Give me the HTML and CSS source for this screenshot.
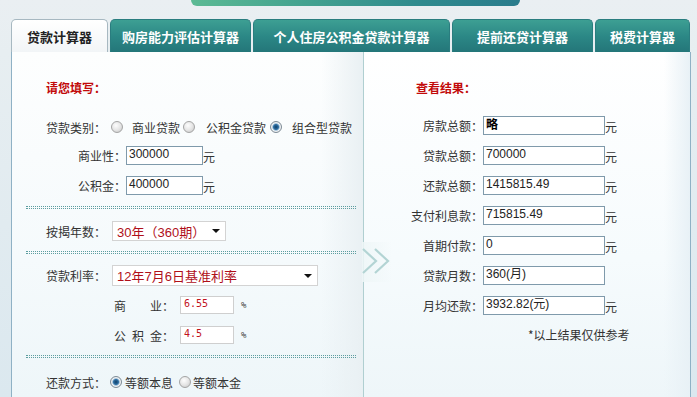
FILE: index.html
```html
<!DOCTYPE html>
<html lang="zh-CN">
<head>
<meta charset="utf-8">
<title>贷款计算器</title>
<link rel="stylesheet" href="styles.css">
</head>
<body>
<div class="topbar"></div>
<div class="tabs">
  <div class="tab active t1">贷款计算器</div>
  <div class="tab t2">购房能力评估计算器</div>
  <div class="tab t3">个人住房公积金贷款计算器</div>
  <div class="tab t4">提前还贷计算器</div>
  <div class="tab t5">税费计算器</div>
</div>
<div class="panel">
  <div class="left">
    <div class="title">请您填写：</div>
    <div class="row type">
      <span class="lbl">贷款类别：</span>
      <span class="radio ra1"></span><span class="opt oa1">商业贷款</span>
      <span class="radio ra2"></span><span class="opt oa2">公积金贷款</span>
      <span class="radio on ra3"></span><span class="opt oa3">组合型贷款</span>
    </div>
    <div class="row amt amt1">
      <span class="lbl">商业性：</span><span class="in amtin">300000</span><span class="unit">元</span>
    </div>
    <div class="row amt amt2">
      <span class="lbl">公积金：</span><span class="in amtin">400000</span><span class="unit">元</span>
    </div>
    <div class="sep sep1"></div>
    <div class="row years">
      <span class="lbl">按揭年数：</span>
      <span class="sel sel1">30年（360期）<i class="arrow"></i></span>
    </div>
    <div class="sep sep2"></div>
    <div class="row rate">
      <span class="lbl">贷款利率：</span>
      <span class="sel sel2">12年7月6日基准利率<i class="arrow"></i></span>
    </div>
    <div class="row rr rr1">
      <span class="jl"><b>商</b><b>业</b></span><span class="colon">：</span><span class="in red">6.55</span><span class="pct">%</span>
    </div>
    <div class="row rr rr2">
      <span class="jl"><b>公</b><b>积</b><b>金</b></span><span class="colon">：</span><span class="in red">4.5</span><span class="pct">%</span>
    </div>
    <div class="sep sep3"></div>
    <div class="row pay">
      <span class="lbl">还款方式：</span>
      <span class="radio on rb1"></span><span class="opt ob1">等额本息</span>
      <span class="radio rb2"></span><span class="opt ob2">等额本金</span>
    </div>
  </div>
  <div class="right">
    <div class="title rtitle">查看结果：</div>
    <div class="res">
      <span class="rl">房款总额：</span><span class="in rin bold">略</span><span class="unit">元</span>
      <span class="rl">贷款总额：</span><span class="in rin">700000</span><span class="unit">元</span>
      <span class="rl">还款总额：</span><span class="in rin">1415815.49</span><span class="unit">元</span>
      <span class="rl">支付利息款：</span><span class="in rin">715815.49</span><span class="unit">元</span>
      <span class="rl">首期付款：</span><span class="in rin">0</span><span class="unit">元</span>
      <span class="rl">贷款月数：</span><span class="in rin">360(月)</span><span class="unit"></span>
      <span class="rl">月均还款：</span><span class="in rin">3932.82(元)</span><span class="unit">元</span>
    </div>
    <div class="note">*以上结果仅供参考</div>
  </div>
  <div class="chev">
    <svg width="30" height="28" viewBox="0 0 30 28">
      <polyline points="1,1 14,13 1,25" fill="none" stroke="#b3d4d4" stroke-width="2.2"/>
      <polyline points="13,1 26,13 13,25" fill="none" stroke="#b3d4d4" stroke-width="2.2"/>
    </svg>
  </div>
</div>
</body>
</html>
```
FILE: styles.css
```css
* { box-sizing: border-box; }
html, body { margin: 0; padding: 0; overflow: hidden; }
body {
  width: 697px;
  height: 397px;
  background: linear-gradient(#eaeff2 0, #e7eef1 52px, #dbe8ef 397px);
  font-family: "Noto Sans CJK SC", sans-serif;
  font-size: 12px;
  color: #333;
}
.topbar {
  margin-left: 191px;
  width: 329px;
  height: 6px;
  border-radius: 0 0 7px 7px;
  background: linear-gradient(to right, #5cba94, #43a290 35%, #2f8a8e 70%, #2a7c8c);
}
.tabs {
  display: flex;
  gap: 2px;
  margin: 13px 0 0 11px;
  height: 33px;
}
.tab {
  height: 33px;
  border-radius: 5px 5px 0 0;
  display: flex;
  align-items: center;
  justify-content: center;
  font-size: 13px;
  font-weight: bold;
  color: #fff;
  background: linear-gradient(#3d9f93, #2c8886 50%, #247679);
  border: 1px solid #2a7d7f;
  border-bottom: none;
}
.tab.active {
  color: #222;
  background: linear-gradient(#ffffff, #f2f5f7);
  border: 1px solid #a7b8c1;
  border-bottom: none;
}
.t1 { width: 97px; }
.t2 { width: 141px; }
.t3 { width: 197px; }
.t4 { width: 141px; }
.t5 { width: 95px; }

.panel {
  display: flex;
  margin-left: 11px;
  width: 680px;
  height: 345px;
  border-left: 1px solid #8fb1c5;
  border-right: 1px solid #8fb1c5;
  position: relative;
}
.left {
  width: 352px;
  border-right: 1px solid #b0cfd1;
  background:
    linear-gradient(to right, rgba(233,240,244,0) 88%, #e9f0f3 100%),
    linear-gradient(#fdfefe, #f5fafc 60%, #eef6f9);
}
.right {
  flex: 1;
  background:
    linear-gradient(to right, rgba(230,240,245,0) 92%, #e8f1f6 100%),
    linear-gradient(#ffffff, #f6fbfd 60%, #eef6f9);
}
.title {
  margin: 26px 0 0 34px;
  height: 20px;
  line-height: 20px;
  color: #c20a0a;
  font-weight: bold;
}
.rtitle { margin-left: 52px; }

.row {
  display: flex;
  align-items: center;
  white-space: nowrap;
}
.lbl { display: inline-block; }
.type { margin: 19px 0 0 34px; height: 20px; }
.radio {
  display: inline-block;
  width: 12px;
  height: 12px;
  border-radius: 50%;
  border: 1px solid #a4a4a4;
  background: radial-gradient(circle at 40% 35%, #fdfdfd 0, #e6e6e6 50%, #c4c4c4 100%);
  flex: none;
}
.radio.on {
  border-color: #7d8b96;
  background: radial-gradient(circle at 50% 50%, #0f3e66 0, #2e6fa3 2.5px, #a9c6dc 3.5px, #f4f6f8 4.2px, #dcdcdc 6px);
}
.ra1 { margin-left: 5px; }
.oa1 { margin-left: 9px; }
.ra2 { margin-left: 3px; }
.oa2 { margin-left: 11px; }
.ra3 { margin-left: 4px; }
.oa3 { margin-left: 10px; }

.amt { margin-left: 66px; height: 19px; align-items: stretch; }
.amt1 { margin-top: 9px; }
.amt2 { margin-top: 11px; }
.amt .lbl { line-height: 19px; }
.in {
  display: inline-block;
  height: 19px;
  border: 1px solid #7f9aab;
  background: #fff;
  font-family: "Liberation Sans", "Noto Sans CJK SC", sans-serif;
  font-size: 12px;
  color: #222;
  padding: 0 2px;
  line-height: 15px;
  white-space: nowrap;
  overflow: hidden;
}
.amtin { width: 77px; }
.unit {
  display: inline-block;
  line-height: 14px;
  align-self: end;
  margin-bottom: 1px;
}

.sep {
  height: 3px;
  border-top: 1px dotted #5d9ea0;
  border-bottom: 1px dotted #5d9ea0;
  margin: 0 7px 0 14px;
}
.sep1 { margin-top: 11px; }
.sep2 { margin-top: 10px; }
.sep3 { margin-top: 11px; }

.years { margin: 12px 0 0 34px; height: 20px; }
.rate { margin: 11px 0 0 34px; height: 21px; }
.sel {
  display: flex;
  align-items: center;
  justify-content: space-between;
  height: 100%;
  margin-left: 6px;
  padding-left: 4px;
  border: 1px solid #d3d3d3;
  background: #fff;
  color: #b0101a;
  font-family: "Liberation Sans", "Noto Sans CJK SC", sans-serif;
  font-size: 13px;
}
.sel1 { width: 114px; }
.sel2 { width: 206px; }
.arrow {
  width: 0;
  height: 0;
  border-left: 4px solid transparent;
  border-right: 4px solid transparent;
  border-top: 4px solid #111;
  margin-right: 5px;
}

.rr { margin-left: 102px; height: 18px; }
.rr1 { margin-top: 10px; }
.rr2 { margin-top: 12px; }
.jl {
  display: flex;
  justify-content: space-between;
  width: 48px;
}
.jl b { font-weight: normal; }
.colon { width: 12px; }
.in.red {
  margin-left: 6px;
  width: 54px;
  height: 18px;
  border-color: #cfcfcf;
  color: #c2121c;
  font-family: "DejaVu Sans Mono", monospace;
  font-size: 10px;
  line-height: 13px;
  padding-left: 3px;
}
.pct {
  margin-left: 7px;
  font-family: "DejaVu Sans Mono", monospace;
  font-size: 9px;
  color: #444;
}

.pay { margin: 14px 0 0 34px; height: 20px; }
.rb1 { margin-left: 4px; }
.ob1 { margin-left: 3px; }
.rb2 { margin-left: 6px; }
.ob2 { margin-left: 2px; }

.res {
  margin-top: 18px;
  display: grid;
  grid-template-columns: 119px 122px auto;
  grid-auto-rows: 19px;
  row-gap: 11px;
}
.rl {
  justify-self: end;
  line-height: 19px;
}
.rin { width: 122px; }
.bold { font-family: "Noto Sans CJK SC", sans-serif; font-weight: bold; color: #000; line-height: 14px; }
.note {
  margin-top: 10px;
  height: 20px;
  line-height: 20px;
  padding-left: 164px;
}
.chev {
  position: absolute;
  left: 350px;
  top: 190px;
  width: 30px;
  height: 40px;
  padding-top: 6px;
  background: linear-gradient(to right, rgba(238,246,247,0.9), rgba(238,246,247,0));
}
.chev svg { display: block; }
```
